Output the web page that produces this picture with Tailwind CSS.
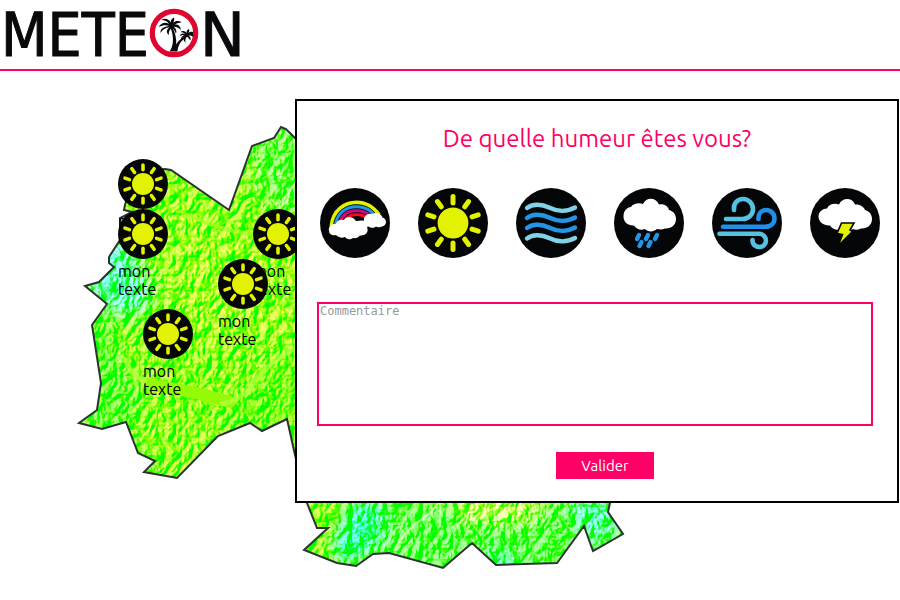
<!DOCTYPE html>
<html lang="fr">
<head>
<meta charset="utf-8">
<meta name="viewport" content="width=device-width, initial-scale=1">
<title>Meteon</title>
<script src="https://cdn.jsdelivr.net/npm/@tailwindcss/browser@4"></script>
</head>
<body class="flex min-h-screen flex-col bg-white font-[Ubuntu,'Noto_Sans',sans-serif] text-base text-black">

<!-- Shared weather icons -->
<svg class="hidden" aria-hidden="true">
  <symbol id="sun" viewBox="0 0 70 70">
    <circle cx="35" cy="35" r="35" fill="#050608"/>
    <circle cx="35" cy="35" r="15.400" fill="#e2f200"/>
    <g stroke="#e2f200" stroke-width="5" stroke-linecap="round">
      <path d="M35 8.500v6.500"/>
      <path d="M35 8.500v6.500" transform="rotate(36 35 35)"/>
      <path d="M35 8.500v6.500" transform="rotate(72 35 35)"/>
      <path d="M35 8.500v6.500" transform="rotate(108 35 35)"/>
      <path d="M35 8.500v6.500" transform="rotate(144 35 35)"/>
      <path d="M35 8.500v6.500" transform="rotate(180 35 35)"/>
      <path d="M35 8.500v6.500" transform="rotate(216 35 35)"/>
      <path d="M35 8.500v6.500" transform="rotate(252 35 35)"/>
      <path d="M35 8.500v6.500" transform="rotate(288 35 35)"/>
      <path d="M35 8.500v6.500" transform="rotate(324 35 35)"/>
    </g>
  </symbol>
</svg>

<header class="border-b-2 border-[#ff0066]">
  <a href="#" aria-label="Meteon" class="block w-fit">
    <svg width="250" height="69" viewBox="0 0 250 69" aria-hidden="true">
      <g fill="#08090b" stroke="#08090b" stroke-width="1" font-size="60">
        <text x="1" y="56" font-family="'DejaVu Sans Condensed','DejaVu Sans',sans-serif">METE</text>
        <text x="200" y="56" font-family="'DejaVu Sans',sans-serif">N</text>
      </g>
      <circle cx="174" cy="33" r="21.700" fill="#fff" stroke="#de0531" stroke-width="5.200"/>
      <g fill="#08090b">
        <path d="M169.500 51.500C174 46 174 35 170.300 27.500L172 26.500C175.500 33 176.600 39 176.200 44.500C178 41 181 38.500 184.500 36.500L185.500 37.800C180 41.500 178 46 177.500 51.500Z"/>
        <path d="M171 27.500C169 25 164 24.500 158.500 27C162 21.800 166 22 169 24C167 21 165 20 161 20C165 17.700 169 19 170.500 22.500C171 20 171.500 18.800 174 17.500C174.500 19.500 174 21.500 173 23C175.500 20.500 179 20.600 181.500 22.500C178 22.700 176 23.500 174.500 24.700C178 24 180.500 26 181 30C178 27.200 176 26.600 173.800 26.800C176 28.500 177 31 176 34C175 30.500 173.500 29 172 28C170 29 168.500 31.500 168.800 35C165.500 32 167 29 169.500 27.200C165 28 162 30 160.500 33C160 28 165 26 171 26Z"/>
        <path d="M186 36C184 34.500 181.500 34.800 179.500 36.500C180.500 32.800 183 33 185 34C183.500 32.500 181.800 32 180.500 32.500C182.500 30 185.300 31 186.500 33C186.500 31 187.500 29.500 189 29C189.500 31 189 32.200 188.500 33C190 31.600 191.800 31.600 193 32.300L193.300 37C191.500 35.500 190 35.500 188.500 35.600C190.500 37 191 38.500 190.500 40.500C189 38.500 188 37 187 36.700C185.500 38 185 40 185.500 42.500C183 40.500 183 38 185 36.400C183 37 181.800 38.200 181 39.800C180.800 37 183 35 186 35Z"/>
      </g>
    </svg>
  </a>
</header>

<main class="relative min-h-[529px] flex-1 overflow-hidden">
  <!-- Relief map -->
  <svg class="absolute left-0 top-0" width="700" height="529" viewBox="0 71 700 529" role="img" aria-label="Carte">
    <defs>
      <path id="border" d="M295 138L286 129L281 127L274 138L252 146L229 210L171 170L165 169L135 172L125 205L124 210L132 212L120 218L120 240L109 257L109 263L114 267L99 282L85 286L107 304L92 325L101 383L97 410L79 423L102 429L126 422L138 453L155 461L144 472L177 478L218 436L250 423L262 431L287 419L295 455L307 503L317 528H328L304 550L337 563L356 566L373 554L389 553L443 568L472 543L496 565L557 563L584 526L593 551L623 534L608 512L610 503V200Z"/>
      <clipPath id="land"><use href="#border"/></clipPath>
      <filter id="soft" x="-50%" y="-50%" width="200%" height="200%"><feGaussianBlur stdDeviation="9"/></filter>
      <filter id="relief" filterUnits="userSpaceOnUse" x="70" y="110" width="570" height="470" color-interpolation-filters="sRGB">
        <feTurbulence type="turbulence" baseFrequency="0.085 0.065" numOctaves="3" seed="8" result="noise"/>
        <feColorMatrix in="noise" values="0 0 0 0 0  0 0 0 0 0  0 0 0 0 0  1 0 0 0 0" result="height"/>
        <feDiffuseLighting in="height" surfaceScale="5" diffuseConstant="1" lighting-color="#fff" result="lit">
          <feDistantLight azimuth="215" elevation="50"/>
        </feDiffuseLighting>
        <feColorMatrix in="lit" values="1 0 0 0 0  0.1 0 0 0 0.75  1.5 0 0 0 -0.39  0 0 0 1 0" result="shade"/>
        <feComposite in="SourceGraphic" in2="shade" operator="arithmetic" k1="0" k2="1" k3="1.1" k4="-0.8"/>
      </filter>
    </defs>
    <g clip-path="url(#land)">
      <g filter="url(#relief)">
        <rect x="70" y="110" width="570" height="470" fill="#98ff10"/>
        <g filter="url(#soft)">
          <path d="M240 120H310V230L260 200Z" fill="#78ff48"/>
          <path d="M80 320L105 310L145 410L125 430L170 480H140L75 430Z" fill="#68ff28"/>
          <path d="M230 400L300 350V440L220 440Z" fill="#78ff00"/>
          <path d="M175 190L210 225L250 240L300 235V330L200 350L165 280Z" fill="#a8ff18"/>
          <path d="M100 240L130 240L155 300L130 320L85 295Z" fill="#60ffc0"/>
          <path d="M375 500H640V580H380Z" fill="#68ff50"/>
          <path d="M350 500H385L375 550L345 568L330 550Z" fill="#38ffb8"/>
          <path d="M455 490H550L530 520H460Z" fill="#d0ff70"/>
          <path d="M570 495H610L612 530L590 540L580 520Z" fill="#60ffc8"/>
          <ellipse cx="500" cy="562" rx="12" ry="7" fill="#30ffd0"/>
        </g>
      </g>
      <g fill="none" stroke-linecap="round" stroke-linejoin="round">
        <path d="M150 383Q165 388 180 390T230 402" stroke="#94fa05" stroke-width="12"/>
        <path d="M126 360Q130 376 145 380M222 404Q242 400 256 380T300 346" stroke="#b4ff3c" stroke-width="5" opacity=".75"/>
        <path d="M180 211Q202 223 226 229T270 238" stroke="#a8fc20" stroke-width="4" opacity=".75"/>
        <path d="M300 178Q290 187 288 196T279 207M438 503Q432 513 418 522T394 550M440 503V526" stroke="#e6ffc8" stroke-width="2" opacity=".7"/>
      </g>
    </g>
    <use href="#border" fill="none" stroke="#2b3330" stroke-width="2"/>
  </svg>

  <!-- Map pins -->
  <div class="absolute left-[118px] top-[88px] w-[50px] leading-[18px]">
    <svg class="mb-[3px] size-[50px]" aria-hidden="true"><use href="#sun"/></svg>mon texte
  </div>
  <div class="absolute left-[118px] top-[138px] w-[50px] leading-[18px]">
    <svg class="mb-[3px] size-[50px]" aria-hidden="true"><use href="#sun"/></svg>mon texte
  </div>
  <div class="absolute left-[253px] top-[138px] w-[50px] leading-[18px]">
    <svg class="mb-[3px] size-[50px]" aria-hidden="true"><use href="#sun"/></svg>mon texte
  </div>
  <div class="absolute left-[218px] top-[188px] w-[50px] leading-[18px]">
    <svg class="mb-[3px] size-[50px]" aria-hidden="true"><use href="#sun"/></svg>mon texte
  </div>
  <div class="absolute left-[143px] top-[238px] w-[50px] leading-[18px]">
    <svg class="mb-[3px] size-[50px]" aria-hidden="true"><use href="#sun"/></svg>mon texte
  </div>

  <!-- Mood dialog -->
  <form role="dialog" aria-labelledby="question" class="absolute right-px top-7 w-[604px] max-w-full border-2 border-black bg-white px-5 pb-[22px] pt-5">
    <h1 id="question" class="text-center text-2xl leading-9 text-[#ff0066]">De quelle humeur êtes vous?</h1>
    <div class="-mr-[3px] mt-[31px] flex justify-between pl-[3px]">
      <button type="button" aria-label="Arc-en-ciel" class="size-[70px] rounded-full">
        <svg viewBox="0 0 70 70" class="size-full" aria-hidden="true">
          <circle cx="35" cy="35" r="35" fill="#050608"/>
          <g fill="none" stroke-width="4">
            <path d="M11.500 38C13 22 25 14.500 36.500 14.500C47 14.500 54 20 59 27" stroke="#e2f200"/>
            <path d="M15.500 38C17 25 26 18.700 36.500 18.700C45 18.700 51 22.500 56 29" stroke="#2196e6"/>
            <path d="M19.500 37C21.500 27 28 22.700 36.500 22.700C42 22.700 47 25 51 29" stroke="#d0087c"/>
            <path d="M24 34C26 29 31 26.400 36.500 26.400C40 26.400 44 27.500 47 30" stroke="#fa0a12" stroke-width="3"/>
          </g>
          <g fill="none" stroke="#050608" stroke-width=".8">
            <path d="M13.500 36C16 23 26 16.700 36.500 16.700C46 16.700 53 21 57 28M17.500 35C20 25 28 20.700 36.500 20.700C44 20.700 50 24 54 29M21.500 34C25 27 30 24.600 36.500 24.600C42 24.600 46 26 49 29"/>
          </g>
          <path d="M48 38C45 31 49 26.500 53 25.500C58 23.500 62 27 62.500 29.500C67.500 31 67 38 62 38.500C59 40 57 39 56 38.500C54 40.500 50 40 48 38Z" fill="#fff"/>
          <path d="M9 43C8 38 12 35.500 16 36C17 32 21 31.500 24 32C26 28 33 28 36 33C39 33 42 32 44 33C43 27 50 24 55 27L56 37C52 39 50 37 47 39C49 44 46 48 40 47.500C37 51 34 50 33 50C29 53 26 50 25 49C20 51 17 48 16 47C12 48 9 46 9 43Z" fill="#fff"/>
        </svg>
      </button>
      <button type="button" aria-label="Soleil" class="size-[70px] rounded-full">
        <svg class="size-full" aria-hidden="true"><use href="#sun"/></svg>
      </button>
      <button type="button" aria-label="Brouillard" class="size-[70px] rounded-full">
        <svg viewBox="0 0 70 70" class="size-full" aria-hidden="true">
          <circle cx="35" cy="35" r="35" fill="#050608"/>
          <g fill="none" stroke-width="4.400" stroke-linecap="round">
            <path d="M11 20C16 16 25 15.500 33 19.500C41 23.500 51 24 59 19.500" stroke="#84d2e8"/>
            <path d="M11 30C16 26 25 25.500 33 29.500C41 33.500 51 34 59 29.500" stroke="#2196e6"/>
            <path d="M11 40C16 36 25 35.500 33 39.500C41 43.500 51 44 59 39.500" stroke="#2196e6"/>
            <path d="M11 50.500C16 46.500 25 46 33 50C41 54 51 54.500 59 50" stroke="#84d2e8"/>
          </g>
        </svg>
      </button>
      <button type="button" aria-label="Pluie" class="size-[70px] rounded-full">
        <svg viewBox="0 0 70 70" class="size-full" aria-hidden="true">
          <circle cx="35" cy="35" r="35" fill="#050608"/>
          <path d="M20 37.500C14 38 9.500 34 9.500 28.500C9.500 22.500 13 19.500 17 19C19 15.500 25 14.500 29 16C32 9 42 9 45 16.500C50 15.500 54 18 55 22C59 23 62 26 62 31C62 37 57 41 51 40.500C48 42 45 41.500 43 41C39 44.500 34 44 31 41C27 43 22 41 20 37.500Z" fill="#fff"/>
          <path d="M25 47L23 51M34 47L32 51M43 47L41 51M27.500 54L25.500 58M36.500 54L34.500 58" stroke="#2196e6" stroke-width="4.400" stroke-linecap="round"/>
        </svg>
      </button>
      <button type="button" aria-label="Vent" class="size-[70px] rounded-full">
        <svg viewBox="0 0 70 70" class="size-full" aria-hidden="true">
          <circle cx="35" cy="35" r="35" fill="#050608"/>
          <g fill="none" stroke-width="4.600" stroke-linecap="round">
            <path d="M22 22C21 15 26 11 31 11C37 11 41 16 41 21C41 27 36 31 30.500 31H14" stroke="#56c2e2"/>
            <path d="M46.500 31C46 25 50 22 54 22C59 22 62.500 26 62.500 30C62.500 36 58 38.800 53 38.800H11" stroke="#1f90ea"/>
            <path d="M7.500 45.800H47C51 45.800 54 49 54 52.500C54 56 51 59 47.500 59C43.500 59 40 56 40.500 52" stroke="#56c2e2"/>
          </g>
        </svg>
      </button>
      <button type="button" aria-label="Orage" class="size-[70px] rounded-full">
        <svg viewBox="0 0 70 70" class="size-full" aria-hidden="true">
          <circle cx="35" cy="35" r="35" fill="#050608"/>
          <path d="M20 37.500C14 38 8.500 34 8.500 28.500C8.500 23.500 13 20.500 17 20.500C19 16 25 15 29 16.500C32 9.500 42 9 45 16.500C50 16 54 19 55 22C59 23 62 26 62 31C62 37 57 41 51 40.500C48 42 45 42 43 41C39 44 34 43 31 41C27 43 22 41 20 37.500Z" fill="#fff"/>
          <path d="M31.500 35H44L40 42L42.500 43.500L28 58L32.500 46.500L27 45.500Z" fill="#e2f200" stroke="#050608" stroke-width="1.600"/>
        </svg>
      </button>
    </div>
    <textarea aria-label="Commentaire" placeholder="Commentaire" class="mt-11 block h-[124px] w-[556px] max-w-full resize-none border-2 border-[#ff0066] bg-white px-px font-['DejaVu_Sans_Mono',monospace] text-xs leading-[14px] outline-none placeholder:text-[#999999]"></textarea>
    <div class="mt-[26px] flex justify-center pl-4">
      <button type="submit" class="h-[27px] w-[98px] bg-[#ff0066] text-[15px] leading-[27px] text-white">Valider</button>
    </div>
  </form>
</main>
</body>
</html>
